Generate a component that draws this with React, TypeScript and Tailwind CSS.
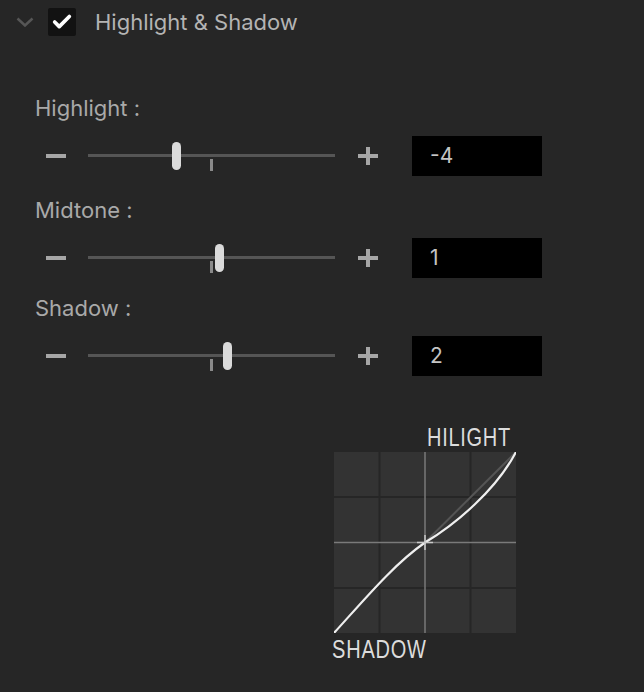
import { Check } from 'lucide-react'

type Row = { label: string; value: string; thumb: number; gap: string }

const rows: Row[] = [
  { label: 'Highlight :', value: '-4', thumb: 84, gap: 'mt-[50px]' },
  { label: 'Midtone :', value: '1', thumb: 127, gap: 'mt-5' },
  { label: 'Shadow :', value: '2', thumb: 135, gap: 'mt-4' },
]

function Slider({ thumb }: { thumb: number }) {
  return (
    <div className="relative h-10 w-[247px] ml-[22px]">
      {/* track */}
      <div className="absolute left-0 right-0 top-[18px] h-[3px] bg-[#555555]" />
      {/* default tick */}
      <div className="absolute left-[122px] top-[23px] w-[3px] h-[12px] bg-[#8a8a8a]" />
      {/* thumb */}
      <div
        className="absolute top-[6px] w-[9px] h-[28px] rounded-full bg-[#dadada]"
        style={{ left: thumb }}
      />
    </div>
  )
}

function ToneRow({ row }: { row: Row }) {
  return (
    <>
      <div className={`${row.gap} h-7 leading-7 text-[22px] text-[#a9a9a9]`}>{row.label}</div>
      <div className="mt-[14px] flex items-center h-10">
        <div className="ml-[11px] w-5 h-1 bg-[#a6a6a6]" />
        <Slider thumb={row.thumb} />
        <div className="ml-[23px] relative w-5 h-[18px]">
          <div className="absolute left-0 right-0 top-[7px] h-1 bg-[#a6a6a6]" />
          <div className="absolute top-0 bottom-0 left-[8px] w-1 bg-[#a6a6a6]" />
        </div>
        <div className="ml-[34px] w-[130px] h-10 bg-black flex items-center pl-[18px] text-[21px] text-[#c4c4c4]">
          {row.value}
        </div>
      </div>
    </>
  )
}

function ToneCurve() {
  return (
    <svg width="182" height="181" viewBox="0 0 182 181" className="ml-[2px] block">
      <rect width="182" height="181" fill="#333333" />
      <g stroke="#262626" strokeWidth="2">
        <line x1="45.5" y1="0" x2="45.5" y2="181" />
        <line x1="136.5" y1="0" x2="136.5" y2="181" />
        <line x1="0" y1="45" x2="182" y2="45" />
        <line x1="0" y1="136" x2="182" y2="136" />
      </g>
      <g stroke="#7a7a7a" strokeWidth="1.5">
        <line x1="91" y1="0" x2="91" y2="181" />
        <line x1="0" y1="90.5" x2="182" y2="90.5" />
      </g>
      <line x1="91" y1="90.5" x2="182" y2="0" stroke="#555555" strokeWidth="2" />
      <path
        d="M0 181 C 30 148, 60 112, 91 90.5 C 122 72, 162 38, 182 0"
        fill="none"
        stroke="#efefef"
        strokeWidth="2.2"
      />
      <g stroke="#c8c8c8" strokeWidth="1.5">
        <line x1="83" y1="90.5" x2="99" y2="90.5" />
        <line x1="91" y1="83" x2="91" y2="98" />
      </g>
    </svg>
  )
}

export default function App() {
  return (
    <div className="min-h-screen bg-[#262626] font-['Inter',sans-serif]">
      {/* Section header */}
      <div className="flex items-center h-11 pl-4">
        <svg width="18" height="10" viewBox="0 0 18 10">
          <polyline points="1.5,1.5 9,8.5 16.5,1.5" fill="none" stroke="#565656" strokeWidth="2.5" />
        </svg>
        <div className="ml-[14px] w-7 h-7 bg-[#121212] rounded-[2px] flex items-center justify-center">
          <Check className="w-[22px] h-[22px] text-white" strokeWidth={4} />
        </div>
        <span className="ml-[19px] text-[22px] leading-7 text-[#b4b4b4]">Highlight &amp; Shadow</span>
      </div>

      {/* Sliders */}
      <div className="pl-[35px]">
        {rows.map((r) => (
          <ToneRow key={r.label} row={r} />
        ))}
      </div>

      {/* Curve preview */}
      <div className="ml-[332px] w-[186px] mt-[51px] font-['Liberation_Sans',sans-serif] text-[#dcdcdc]">
        <div className="ml-[95px] h-5 leading-5 text-[20px] tracking-[0.7px] scale-y-125">HILIGHT</div>
        <div className="mt-[5px]">
          <ToneCurve />
        </div>
        <div className="mt-[6px] h-5 leading-5 text-[20px] tracking-[0.8px] scale-y-125">SHADOW</div>
      </div>
    </div>
  )
}
